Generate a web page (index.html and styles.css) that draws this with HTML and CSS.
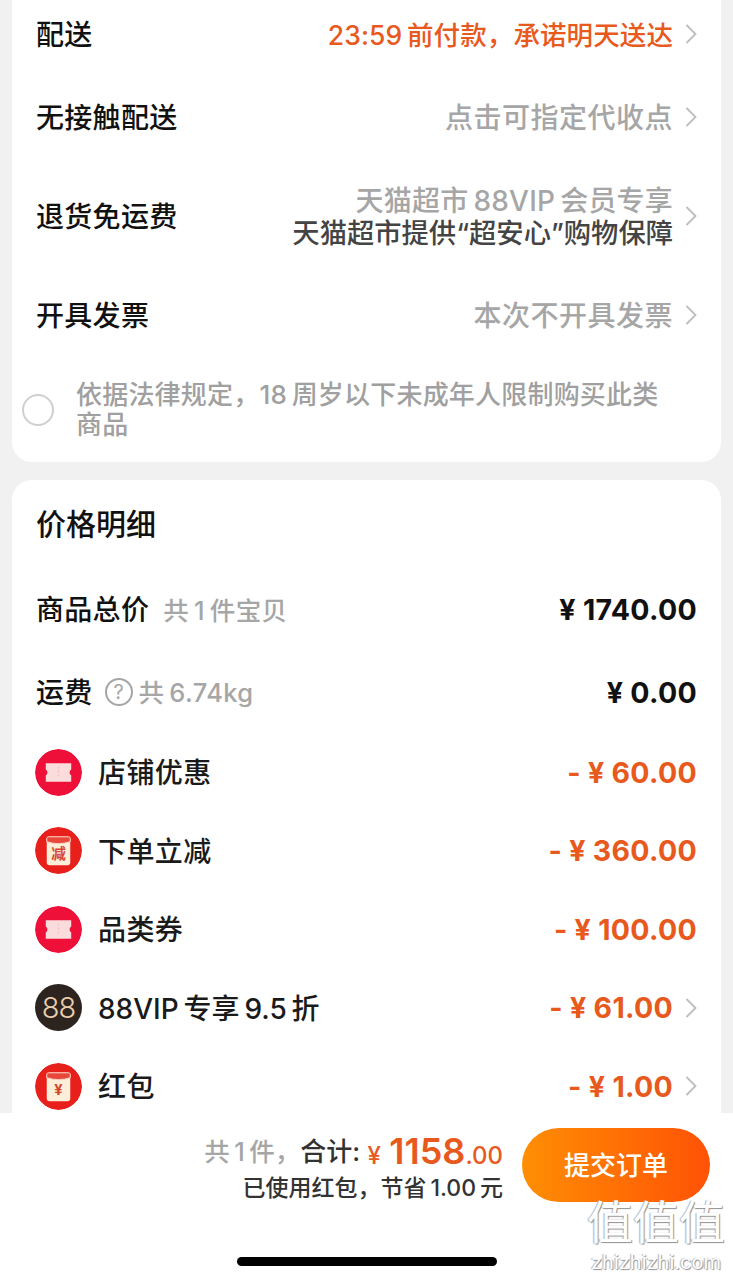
FILE: index.html
```html
<!DOCTYPE html>
<html lang="zh-CN">
<head>
  <meta charset="UTF-8" />
  <meta name="viewport" content="width=device-width, initial-scale=1.0"/>
  <title>确认订单</title>
  <link rel="stylesheet" href="styles.css">
</head>
<body>
  <div class="page">
    <div class="scroll">
      <section class="card card-top">
        <div class="row row-first">
          <span class="label">配送</span>
          <span class="value value-promise orange">23:59&#8201;前付款，承诺明天送达</span>
          <svg class="chev" viewBox="0 0 12 20"><path d="M1.5 1l9 9-9 9"/></svg>
        </div>
        <div class="row row-98">
          <span class="label">无接触配送</span>
          <span class="value">点击可指定代收点</span>
          <svg class="chev" viewBox="0 0 12 20"><path d="M1.5 1l9 9-9 9"/></svg>
        </div>
        <div class="row row-100">
          <span class="label">退货免运费</span>
          <span class="value two-line">天猫超市&#8201;88VIP&#8201;会员专享<br><em>天猫超市提供“超安心”购物保障</em></span>
          <svg class="chev" viewBox="0 0 12 20"><path d="M1.5 1l9 9-9 9"/></svg>
        </div>
        <div class="row row-98">
          <span class="label">开具发票</span>
          <span class="value">本次不开具发票</span>
          <svg class="chev" viewBox="0 0 12 20"><path d="M1.5 1l9 9-9 9"/></svg>
        </div>
        <div class="notice">
          <span class="radio"></span>
          <p>依据法律规定，18&#8201;周岁以下未成年人限制购买此类商品</p>
        </div>
      </section>

      <section class="card card-price">
        <h2>价格明细</h2>
        <div class="line line-total">
          <span class="label">商品总价</span>
          <span class="hint">共&#8201;1&#8201;件宝贝</span>
          <span class="amount">¥ 1740.00</span>
        </div>
        <div class="line line-ship">
          <span class="label">运费</span>
          <span class="help">?</span>
          <span class="hint hint-tight">共&#8201;6.74kg</span>
          <span class="amount">¥ 0.00</span>
        </div>
        <div class="item">
          <svg class="badge" viewBox="0 0 48 48"><circle cx="24" cy="24" r="24" fill="#ee1039"/><path d="M11 14.500h26v6.500a3.500 3.500 0 0 0 0 6v6.500H11V27a3.500 3.500 0 0 0 0-6z" fill="#fbdcdc"/><path d="M24 18v12" stroke="#f6bcc4" stroke-width="1.500" stroke-dasharray="2 2"/></svg>
          <span class="name">店铺优惠</span>
          <span class="amount orange">- ¥ 60.00</span>
        </div>
        <div class="item">
          <svg class="badge" viewBox="0 0 48 48">
            <circle cx="24" cy="24" r="24" fill="#e8201c"/>
            <rect x="12" y="10" width="24" height="29" rx="3" fill="#fdeed9"/>
            <path d="M12 11.500q0-1.500 2-1.500h20q2 0 2 1.500v3.500q-12 4-24 0z" fill="#e8483c" stroke="#fbd8c8"/>
            <text class="env-text" x="24" y="33" text-anchor="middle">减</text>
          </svg>
          <span class="name">下单立减</span>
          <span class="amount orange">- ¥ 360.00</span>
        </div>
        <div class="item">
          <svg class="badge" viewBox="0 0 48 48"><circle cx="24" cy="24" r="24" fill="#ee1039"/><path d="M11 14.500h26v6.500a3.500 3.500 0 0 0 0 6v6.500H11V27a3.500 3.500 0 0 0 0-6z" fill="#fbdcdc"/><path d="M24 18v12" stroke="#f6bcc4" stroke-width="1.500" stroke-dasharray="2 2"/></svg>
          <span class="name">品类券</span>
          <span class="amount orange">- ¥ 100.00</span>
        </div>
        <div class="item">
          <span class="badge vip">88</span>
          <span class="name name-vip">88VIP&#8201;专享&#8201;9.5&#8201;折</span>
          <span class="amount orange">- ¥ 61.00</span>
          <svg class="chev chev-item" viewBox="0 0 12 20"><path d="M1.5 1l9 9-9 9"/></svg>
        </div>
        <div class="item">
          <svg class="badge" viewBox="0 0 48 48">
            <circle cx="24" cy="24" r="24" fill="#e8201c"/>
            <rect x="12" y="10" width="24" height="29" rx="3" fill="#fdeed9"/>
            <path d="M12 11.500q0-1.500 2-1.500h20q2 0 2 1.500v3.500q-12 4-24 0z" fill="#e8483c" stroke="#fbd8c8"/>
            <text class="env-text" x="24" y="33" text-anchor="middle">¥</text>
          </svg>
          <span class="name">红包</span>
          <span class="amount orange">- ¥ 1.00</span>
          <svg class="chev chev-item" viewBox="0 0 12 20"><path d="M1.5 1l9 9-9 9"/></svg>
        </div>
      </section>
    </div>

    <footer class="bar">
      <div class="bar-main">
        <div class="sum">
          <div class="sum-top">
            <span class="count">共&#8201;1&#8201;件，</span><span class="total-label">合计:</span>
            <span class="price"><i>¥</i> <b>1158</b><small>.00</small></span>
          </div>
          <div class="sum-sub">已使用红包，节省&#8201;1.00&#8201;元</div>
        </div>
        <button class="submit">提交订单</button>
      </div>
      <div class="home"></div>
    </footer>

    <div class="mark">
      <div class="mark-glyph">值值值</div>
      <div class="mark-url">zhizhizhi.com</div>
    </div>
  </div>
</body>
</html>
```

FILE: styles.css
```css
* {
  box-sizing: border-box;
}
body {
  margin: 0;
  font-family: Inter, "Noto Sans CJK SC", sans-serif;
  background: #f1f1f1;
  color: #111;
}
.page {
  position: relative;
  width: 733px;
  height: 1280px;
  overflow: hidden;
  display: flex;
  flex-direction: column;
}
.scroll {
  height: 1113px;
  overflow: hidden;
  padding: 0 12px;
  flex: none;
}
.card {
  background: #fff;
  padding: 0 24px;
}
.card-top {
  height: 462px;
  border-radius: 0 0 20px 20px;
  margin-bottom: 18px;
}
.card-price {
  border-radius: 20px 20px 0 0;
  height: 660px;
}
.orange {
  color: #e8591d !important;
}

/* rows */
.row {
  display: flex;
  align-items: center;
}
.row-first { height: 68px; }
.row-98 { height: 98px; }
.row-100 { height: 100px; }
.label {
  font-size: 28px;
  font-weight: 500;
  line-height: 36px;
  letter-spacing: 0.3px;
  padding-top: 2px;
  flex: none;
}
.value {
  margin-left: auto;
  font-size: 28px;
  font-weight: 500;
  line-height: 36px;
  color: #a6a6a6;
  text-align: right;
  letter-spacing: 0.5px;
  padding-top: 2px;
}
.value-promise {
  font-size: 26.500px;
  letter-spacing: 0.1px;
}
.value em {
  font-style: normal;
  font-size: 27.300px;
  letter-spacing: 0;
  color: #444;
}
.two-line {
  line-height: 32px;
  letter-spacing: 0.2px;
}
.chev {
  width: 12px;
  height: 20px;
  margin-left: 12px;
  flex: none;
  fill: none;
  stroke: #bdbdbd;
  stroke-width: 1.800;
}

.notice {
  display: flex;
  align-items: center;
  height: 98px;
  margin-left: -14px;
  gap: 22px;
  padding-bottom: 6px;
}
.radio {
  width: 32px;
  height: 32px;
  border: 2px solid #cfcfcf;
  border-radius: 50%;
  flex: none;
}
.notice p {
  margin: 0;
  font-size: 26px;
  font-weight: 500;
  line-height: 30px;
  letter-spacing: 0.2px;
  color: #a0a0a0;
  width: 590px;
}

/* price card */
.card-price h2 {
  margin: 0;
  height: 89px;
  font-size: 30px;
  font-weight: 500;
  line-height: 88px;
}
.line {
  display: flex;
  align-items: center;
}
.line-total { height: 81px; }
.line-total .label { padding-top: 0; }
.line-ship {
  height: 82px;
  padding-top: 2px;
  margin-bottom: 1px;
}
.hint {
  margin-left: 14px;
  font-size: 25.500px;
  letter-spacing: 0.4px;
  color: #a6a6a6;
  font-weight: 500;
  padding-bottom: 3px;
}
.hint-tight {
  margin-left: 6px;
}
.help {
  width: 28px;
  height: 28px;
  margin-left: 12px;
  border: 2px solid #a6a6a6;
  border-radius: 50%;
  color: #a6a6a6;
  font-size: 20px;
  line-height: 24px;
  text-align: center;
}
.amount {
  margin-left: auto;
  font-size: 28.500px;
  font-weight: 700;
  letter-spacing: 0.3px;
}
.item {
  display: flex;
  align-items: center;
  height: 78.500px;
  margin-left: -1px;
}
.badge {
  width: 47px;
  height: 47px;
  flex: none;
  border-radius: 50%;
}
.env-text {
  fill: #d8432e;
  font-size: 15px;
  font-weight: 700;
}
.name {
  margin-left: 16px;
  font-size: 28px;
  font-weight: 500;
  letter-spacing: 0.4px;
  color: #1a1a1a;
  padding-bottom: 2px;
}
.name-vip {
  letter-spacing: 0;
}
.vip {
  background: #2d241f;
  color: #eccfae;
  font-size: 29px;
  font-weight: 300;
  line-height: 47px;
  text-align: center;
  letter-spacing: -1px;
}
.chev-item {
  margin-left: 12px;
}

/* bottom bar */
.bar {
  flex: 1;
  background: #fff;
  display: flex;
  flex-direction: column;
}
.bar-main {
  display: flex;
  justify-content: flex-end;
  padding: 15px 23px 0 0;
  gap: 19px;
}
.sum {
  text-align: right;
  padding-top: 3px;
}
.sum-top {
  height: 41px;
  line-height: 40px;
  white-space: nowrap;
}
.count {
  font-size: 25.500px;
  color: #a6a6a6;
  font-weight: 500;
  vertical-align: 3px;
}
.total-label {
  font-size: 26px;
  font-weight: 500;
  color: #333;
  vertical-align: 3px;
  margin-right: 3px;
}
.price {
  color: #e8591d;
  font-weight: 500;
}
.price i {
  font-style: normal;
  font-size: 24px;
  margin-right: 4px;
}
.price b {
  font-size: 36px;
  font-weight: 600;
}
.price small {
  font-size: 24px;
}
.sum-sub {
  font-size: 23px;
  font-weight: 500;
  line-height: 30px;
  color: #333;
  padding-top: 1px;
}
.submit {
  width: 188px;
  height: 74px;
  padding: 0 0 3px;
  border: 0;
  border-radius: 37px;
  background: linear-gradient(90deg, #ff8e05, #ff5205);
  color: #fff;
  font-family: inherit;
  font-size: 26px;
  font-weight: 500;
}
.home {
  width: 260px;
  height: 9px;
  margin: 54px 0 0 237px;
  border-radius: 5px;
  background: #000;
}

/* watermark over the corner */
.mark {
  position: absolute;
  right: 8px;
  bottom: 6px;
  width: 138px;
  text-align: center;
  color: #fff;
  text-shadow: 1px 1px 1px #8f8f8f, -1px 0 1px #b0b0b0;
}
.mark-glyph {
  font-size: 46px;
  line-height: 52px;
  white-space: nowrap;
}
.mark-url {
  font-size: 20px;
  line-height: 24px;
  margin-top: 2px;
}
```
